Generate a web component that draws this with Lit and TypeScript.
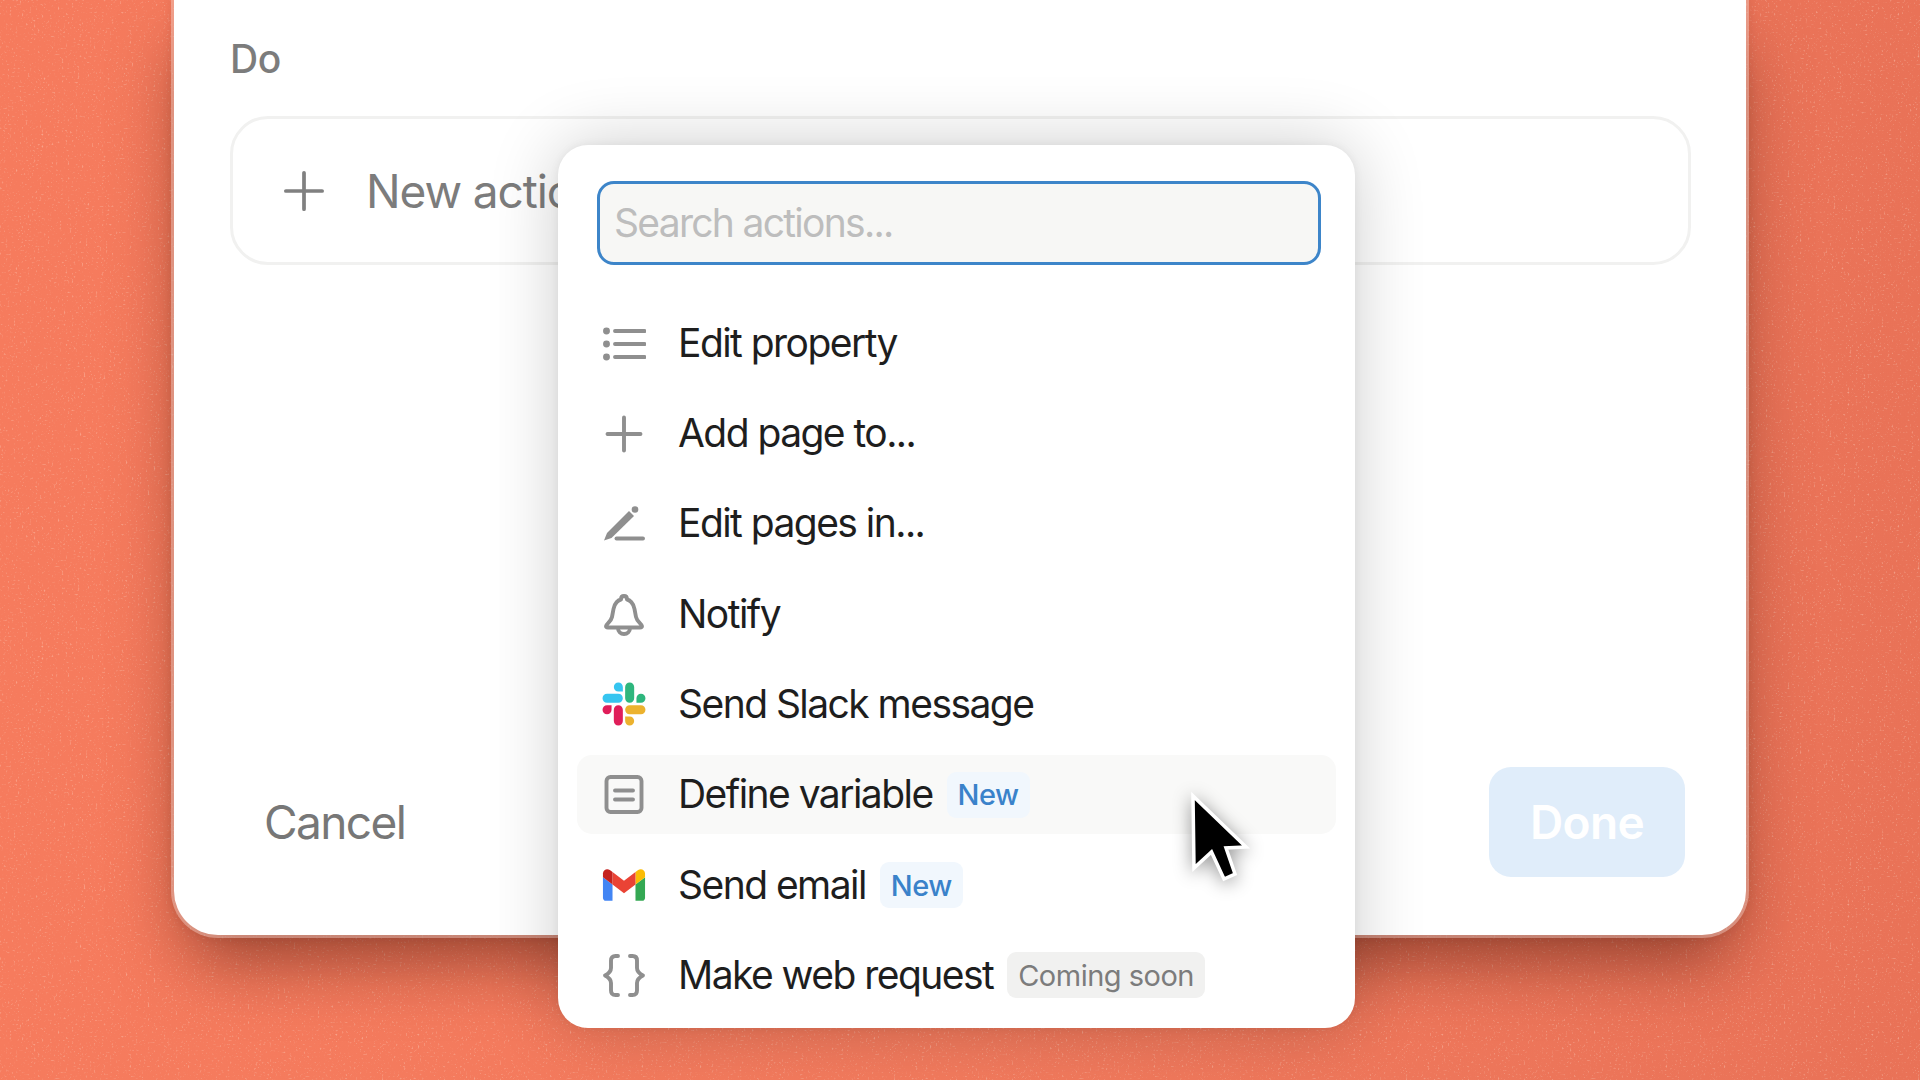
import { LitElement, html, css, svg } from "lit";
import { customElement } from "lit/decorators.js";

const stroke = (body: unknown) => html`<svg class="icon" viewBox="0 0 44 44" fill="none" stroke="#8f8f8f" stroke-width="3.9" stroke-linecap="round" stroke-linejoin="round">${body}</svg>`;

const icons: Record<string, unknown> = {
  list: stroke(svg`<path d="M13 10H42.500M13 23H42.500M13 36H42.500"/><circle cx="4.500" cy="10" r="1.500" fill="#8f8f8f"/><circle cx="4.500" cy="23" r="1.500" fill="#8f8f8f"/><circle cx="4.500" cy="36" r="1.500" fill="#8f8f8f"/>`),
  plus: stroke(svg`<path d="M22 5.500V38.500M5.500 22H38.500"/>`),
  pen: html`<svg class="icon" viewBox="0 0 44 44" fill="none"><path d="M2 38.500l3-7.500L27 9l5 5L9.500 36z" fill="#8f8f8f"/><circle cx="33" cy="7.500" r="3.300" fill="#8f8f8f"/><path d="M14.500 36.500H41" stroke="#8f8f8f" stroke-width="3.900" stroke-linecap="round"/></svg>`,
  bell: stroke(svg`<path d="M4 34c0-2 5-4 6-9l1.500-8c1-6 5-9 7.500-9.500 0-2 1-3.500 3-3.500s3 1.500 3 3.500c2.500.5 6.500 3.500 7.500 9.500l1.500 8c1 5 6 7 6 9 0 1-.8 1.500-2 1.500H6c-1.200 0-2-.5-2-1.500z"/><path d="M16 36c0 3.500 2.700 6 6 6s6-2.500 6-6"/>`),
  slack: html`<svg class="icon" viewBox="-1.500 -1.500 125.800 125.800"><path fill="#E01E5A" d="M25.800 77.600c0 7.100-5.800 12.900-12.900 12.900S0 84.700 0 77.600s5.800-12.900 12.900-12.900h12.900v12.900zM32.300 77.600c0-7.100 5.800-12.900 12.900-12.900s12.900 5.800 12.900 12.900v32.300c0 7.100-5.800 12.900-12.900 12.900s-12.900-5.800-12.900-12.900V77.600z"/><path fill="#36C5F0" d="M45.200 25.800c-7.100 0-12.900-5.800-12.900-12.900S38.100 0 45.200 0s12.900 5.800 12.900 12.900v12.900H45.200zM45.200 32.300c7.100 0 12.900 5.800 12.900 12.900s-5.800 12.900-12.900 12.900H12.900C5.800 58.100 0 52.300 0 45.200s5.800-12.900 12.900-12.900h32.300z"/><path fill="#2EB67D" d="M97 45.200c0-7.100 5.800-12.900 12.900-12.900s12.900 5.800 12.900 12.900-5.800 12.900-12.900 12.900H97V45.200zM90.500 45.200c0 7.100-5.800 12.900-12.900 12.900s-12.900-5.800-12.900-12.900V12.900C64.700 5.800 70.500 0 77.600 0s12.900 5.800 12.900 12.900v32.300z"/><path fill="#ECB22E" d="M77.600 97c7.100 0 12.900 5.800 12.900 12.900s-5.800 12.900-12.900 12.900-12.900-5.800-12.900-12.900V97h12.900zM77.600 90.500c-7.100 0-12.900-5.800-12.900-12.900s5.800-12.900 12.900-12.900h32.300c7.100 0 12.900 5.800 12.900 12.900s-5.800 12.900-12.900 12.900H77.600z"/></svg>`,
  doc: stroke(svg`<rect x="4.500" y="4" width="35" height="35" rx="4"/><path d="M13 17.500H31M13 26.500H31"/>`),
  gmail: html`<svg class="icon" viewBox="50 31.500 92 87"><path fill="#4285f4" d="M58 108h14V74L52 59v43c0 3.320 2.690 6 6 6"/><path fill="#34a853" d="M120 108h14c3.320 0 6-2.690 6-6V59l-20 15"/><path fill="#fbbc04" d="M120 48v26l20-15v-8c0-7.420-8.470-11.650-14.400-7.200"/><path fill="#ea4335" d="M72 74V48l24 18 24-18v26L96 92"/><path fill="#c5221f" d="M52 51v8l20 15V48l-5.600-4.200c-5.940-4.450-14.400-.22-14.400 7.200"/></svg>`,
  braces: stroke(svg`<path d="M16 3h-2.500C10.500 3 9 4.500 9 7.500V15c0 3.500-2 5.500-6 7.500 4 2 6 4 6 7.500v7.500c0 3 1.500 4.500 4.500 4.500H16M28 3h2.500c3 0 4.500 1.500 4.500 4.500V15c0 3.500 2 5.500 6 7.500-4 2-6 4-6 7.500v7.500c0 3-1.500 4.500-4.500 4.500H28"/>`),
};

type Row = { icon: string; label: string; badge?: string; soon?: boolean; active?: boolean };
const rows: Row[] = [
  { icon: "list", label: "Edit property" },
  { icon: "plus", label: "Add page to..." },
  { icon: "pen", label: "Edit pages in..." },
  { icon: "bell", label: "Notify" },
  { icon: "slack", label: "Send Slack message" },
  { icon: "doc", label: "Define variable", badge: "New", active: true },
  { icon: "gmail", label: "Send email", badge: "New" },
  { icon: "braces", label: "Make web request", badge: "Coming soon", soon: true },
];

@customElement("app-root")
export class AppRoot extends LitElement {
  static styles = css`
    :host {
      display: block;
      width: 1920px;
      height: 1080px;
      overflow: hidden;
      position: relative;
      background: linear-gradient(90deg, #f67b5d 0%, #f27a5d 50%, #e97257 100%);
      font-family: Inter, "Liberation Sans", sans-serif;
    }
    .noise { position: absolute; inset: 0; width: 1920px; height: 1080px; }
    .stage { position: relative; display: flex; padding: 0 174px; }
    .dialog {
      position: relative;
      flex: 1;
      height: 935px;
      box-sizing: border-box;
      padding: 37px 55px 58px 56px;
      background: #fff;
      border-radius: 0 0 44px 44px;
      box-shadow: 0 0 0 3px rgba(255, 225, 215, 0.4), 0 0 8px 3px rgba(90, 30, 15, 0.1), 0 36px 70px -14px rgba(60, 15, 5, 0.55);
      display: flex;
      flex-direction: column;
    }
    .title { font-size: 39px; line-height: 44px; font-weight: 500; color: #7c7c7c; letter-spacing: -0.3px; }
    .new {
      margin-top: 35px;
      height: 149px;
      box-sizing: border-box;
      border: 3px solid #f1f1f0;
      border-radius: 38px;
      display: flex;
      align-items: center;
      padding-left: 50px;
      gap: 41px;
      color: #7c7c7c;
      font-size: 46px;
      letter-spacing: -1.1px;
    }
    .new svg { width: 42px; height: 42px; }
    .foot { margin-top: auto; display: flex; justify-content: space-between; align-items: center; padding: 0 6px 0 34px; }
    .cancel { font-size: 46px; color: #777; letter-spacing: -1.6px; }
    .done {
      width: 196px; height: 110px; border-radius: 22px; background: #e0edfa; color: #fff;
      font-size: 46px; font-weight: 600; display: flex; align-items: center; justify-content: center;
      letter-spacing: -0.6px;
    }
    .menu {
      position: absolute;
      left: 558px; top: 145px; width: 797px; height: 883px;
      box-sizing: border-box;
      background: #fff;
      border-radius: 30px;
      box-shadow: 0 0 70px rgba(0, 0, 0, 0.2), 0 0 10px rgba(0,0,0,.06);
      padding: 36px 19px 0;
    }
    .search {
      margin: 0 15px 0 20px;
      height: 84px;
      box-sizing: border-box;
      border: 3px solid #3d85c9;
      border-radius: 17px;
      background: #f7f7f5;
      display: flex; align-items: center;
      padding: 0 0 2px 14px;
      font-size: 39px; color: #bdbdbd;
      letter-spacing: -1.700px;
    }
    .list { margin-top: 39px; display: flex; flex-direction: column; gap: 11.800px; }
    .row {
      height: 78.500px;
      display: flex; align-items: center;
      padding-left: 25px;
      border-radius: 15px;
      font-size: 39px;
      color: #1e1e1e;
      letter-spacing: -1.550px;
    }
    .label { margin-top: -2px; }
    .row.active { background: #f9f9f8; }
    .icon { width: 44px; height: 44px; flex: none; display: block; margin-right: 32px; }
    .badge {
      margin-left: 14px; height: 46px; padding: 0 11px; border-radius: 9px;
      display: flex; align-items: center;
      font-size: 29px; font-weight: 500; letter-spacing: -0.5px;
      background: #f1f7fd; color: #3a82ca;
    }
    .badge.soon { background: #f1f1f0; color: #7c7c7c; font-weight: 400; letter-spacing: -0.5px; }
    .cursor { position: absolute; left: 1180px; top: 785px; width: 80px; height: 110px; filter: drop-shadow(0 3px 9px rgba(0,0,0,.4)); }
  `;

  render() {
    return html`
      <svg class="noise">
        <filter id="n" x="0" y="0" width="100%" height="100%">
          <feTurbulence type="fractalNoise" baseFrequency="0.5" numOctaves="2" seed="7"/>
          <feColorMatrix type="matrix" values="0 0 0 0 1  0 0 0 0 .78  0 0 0 0 .66  2.200 2.200 0 0 -2.500"/>
        </filter>
        <rect width="1920" height="1080" filter="url(#n)" opacity=".4"/>
      </svg>
      <div class="stage">
        <div class="dialog">
          <div class="title">Do</div>
          <div class="new">
            <svg viewBox="0 0 44 44" fill="none" stroke="#808080" stroke-width="3.900" stroke-linecap="round"><path d="M22 3V41M3 22H41"/></svg>
            <span>New action</span>
          </div>
          <div class="foot">
            <span class="cancel">Cancel</span>
            <span class="done">Done</span>
          </div>
        </div>
      </div>
      <div class="menu">
        <div class="search">Search actions...</div>
        <div class="list">
          ${rows.map(
            (r) => html`<div class="row ${r.active ? "active" : ""}">
              ${icons[r.icon]}<span class="label">${r.label}</span>
              ${r.badge ? html`<span class="badge ${r.soon ? "soon" : ""}">${r.badge}</span>` : ""}
            </div>`
          )}
        </div>
      </div>
      <svg class="cursor" viewBox="1180 785 80 110">
        <path d="M1193 796L1194 868L1211.500 852L1224 879L1235 874L1226 848L1246 847Z" fill="#000" stroke="#fff" stroke-width="3.500" stroke-linejoin="miter"/>
      </svg>
    `;
  }
}
